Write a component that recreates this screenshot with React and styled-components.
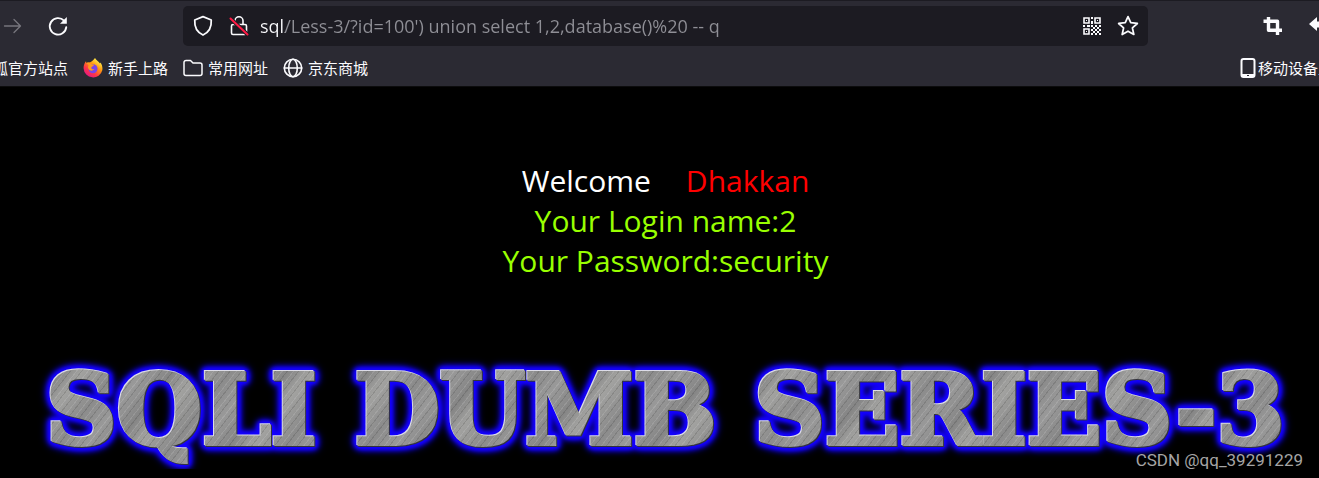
import { useState } from 'react';
import styled, { createGlobalStyle } from 'styled-components';

const UI_FONT = '"Open Sans", "Noto Sans CJK SC", sans-serif';

const GlobalStyle = createGlobalStyle`
  * {
    box-sizing: border-box;
  }
  body {
    margin: 0;
    background: #000;
    overflow-x: hidden;
    font-family: ${UI_FONT};
  }
`;

const Browser = styled.header`
  background: #2b2a33;
  border-top: 1px solid #1c1b22;
  border-bottom: 1px solid #0c0c0d;
  color: #fbfbfe;
`;

const Toolbar = styled.nav`
  display: flex;
  align-items: center;
  height: 50px;
`;

const ToolButton = styled.button`
  display: flex;
  flex: none;
  padding: 0;
  border: 0;
  background: none;
  color: ${props => (props.$dim ? '#77767e' : '#fbfbfe')};
`;

const NavButtons = styled.div`
  display: flex;
  flex: none;
  align-items: center;
  gap: 24px;
  width: 183px;
  padding-left: 3px;
`;

const UrlBar = styled.div`
  display: flex;
  flex: 1;
  align-items: center;
  gap: 15px;
  height: 40px;
  padding: 0 9px;
  border-radius: 5px;
  background: #1c1b22;
`;

/* host part bright, the rest of the address grey */
const UrlInput = styled.input`
  flex: 1;
  min-width: 0;
  height: 32px;
  margin-left: -4px;
  padding: 0;
  border: 0;
  outline: 0;
  font: 18px ${UI_FONT};
  color: transparent;
  background: linear-gradient(90deg, #fbfbfe 25px, #8f8f96 25px);
  background-clip: text;
  -webkit-background-clip: text;
`;

const Extensions = styled.div`
  display: flex;
  flex: none;
  align-items: center;
  justify-content: flex-end;
  gap: 26px;
  width: 171px;
`;

const Clipped = styled.div`
  display: flex;
  flex: none;
  width: ${props => props.$width}px;
  overflow: hidden;
  justify-content: ${props => (props.$end ? 'flex-end' : 'flex-start')};
`;

const Bookmarks = styled.nav`
  display: flex;
  align-items: center;
  gap: 15px;
  height: 35px;
  padding-bottom: 1px;
`;

const Bookmark = styled.a`
  display: flex;
  flex: none;
  align-items: center;
  gap: ${props => (props.$tight ? 2 : 5)}px;
  font-size: 15px;
  line-height: 22px;
  white-space: nowrap;
  color: inherit;
  text-decoration: none;
`;

const Spacer = styled.div`
  flex: 1;
`;

const Page = styled.main`
  padding-left: 12px;
`;

const Message = styled.section`
  padding-top: 74px;
  text-align: center;
  font-size: 30px;
  line-height: 40px;
  color: #99ff00;
`;

const Greeting = styled.div`
  display: flex;
  justify-content: center;
  gap: 35px;
  color: #fff;
`;

const UserName = styled.span`
  color: #f00;
`;

const Banner = styled.h1`
  display: flex;
  justify-content: space-between;
  margin: 70px 0 0;
  padding: 0 34px;
  font: bold 98px/118px "DejaVu Serif", serif;
  filter: drop-shadow(-1px -1px 0 #dcdce8) drop-shadow(1px 1px 0 #33333c)
    drop-shadow(0 0 2px #1400ff) drop-shadow(0 0 2px #1400ff)
    drop-shadow(0 0 2px #1400ff) drop-shadow(0 0 3px #1400ff);
`;

const Metal = styled.span`
  color: transparent;
  -webkit-text-stroke: 4px transparent;
  background:
    repeating-linear-gradient(128deg, rgba(255, 255, 255, 0.12) 0 1px, transparent 1px 4px, rgba(40, 40, 40, 0.16) 4px 5px, transparent 5px 9px),
    repeating-linear-gradient(128deg, #999 0, #858585 23px, #a2a2a0 41px, #8b8b8b 67px, #999 90px);
  background-clip: text;
  -webkit-background-clip: text;
`;

const Watermark = styled.footer`
  position: absolute;
  right: 16px;
  top: 450px;
  font: 17px/20px Roboto, sans-serif;
  color: #a5a5a5;
`;

const Icon = ({ size = 20, children, ...rest }) => (
  <svg width={size} height={size} viewBox="0 0 20 20" fill="none" stroke="currentColor"
    strokeWidth="1.6" strokeLinecap="round" strokeLinejoin="round" aria-hidden="true" {...rest}>
    {children}
  </svg>
);

const ForwardIcon = () => (
  <Icon><path d="M1.5 10h16M11 3.5l6.5 6.5-6.5 6.5" strokeWidth="1.3" /></Icon>
);

const ReloadIcon = () => (
  <Icon size={22}>
    <path d="M15.500 5.200A7.500 7.500 0 1 0 17.500 11" strokeWidth="1.7" />
    <path d="M18 1.800v6.200h-6.200z" fill="currentColor" stroke="none" />
  </Icon>
);

const ShieldIcon = () => (
  <Icon size={22}><path d="M10 1.5l7.500 3c.4 6.300-1.700 11-7.500 13.700C4.200 15.500 2.100 10.800 2.500 4.500z" /></Icon>
);

const LockIcon = () => (
  <Icon>
    <path d="M6 8V4.800a4 4 0 0 1 8 0V8M4 8.500h12a1.500 1.500 0 0 1 1.500 1.500v7a1.500 1.500 0 0 1-1.500 1.500H4A1.500 1.500 0 0 1 2.500 17v-7A1.500 1.500 0 0 1 4 8.500z" />
    <path d="M1.500 2.500l17 16" stroke="#1c1b22" strokeWidth="4" />
    <path d="M1.500 2.500l17 16" stroke="#ff1a45" strokeWidth="2" />
  </Icon>
);

const QrIcon = () => (
  <Icon strokeLinejoin="miter" strokeLinecap="butt">
    <path d="M2 2h5v5H2zM13 2h5v5h-5zM2 13h5v5H2z" />
    <path fill="currentColor" stroke="none" d="M4 4h1v1H4zM15 4h1v1h-1zM4 15h1v1H4zM9 1h2v2H9zM9 5h2v3H9zM1 9h2v2H1zM5 9h3v2H5zM9 9h2v2H9zM13 9h2v2h-2zM17 9h2v2h-2zM11 11h2v2h-2zM15 11h2v2h-2zM9 13h2v2H9zM13 13h2v2h-2zM17 13h2v2h-2zM11 15h2v2h-2zM15 15h2v2h-2zM9 17h2v2H9zM13 17h2v2h-2zM17 17h2v2h-2z" />
  </Icon>
);

const StarIcon = () => (
  <Icon size={22}><path d="M10 1.500l2.500 5.500 6 .7-4.500 4 1.300 6-5.300-3-5.300 3 1.300-6-4.500-4 6-.7z" /></Icon>
);

const CropIcon = () => (
  <Icon strokeWidth="3.400" strokeLinecap="butt" strokeLinejoin="round">
    <path d="M.5 5.200H14.500V19M5.500 1v13.300H19" />
  </Icon>
);

const UndoIcon = () => (
  <Icon><path d="M8 1v4.500c7 0 10 4 10 11-2-4-5-5-10-5V15L0 8z" fill="currentColor" stroke="none" /></Icon>
);

const FirefoxIcon = () => (
  <Icon stroke="none">
    <defs>
      <linearGradient id="flame" x1="16" y1="2" x2="4" y2="18" gradientUnits="userSpaceOnUse">
        <stop offset="0" stopColor="#fff44f" />
        <stop offset="0.35" stopColor="#ff980e" />
        <stop offset="0.7" stopColor="#ff3647" />
        <stop offset="1" stopColor="#e31587" />
      </linearGradient>
    </defs>
    <path fill="url(#flame)" d="M12 0c1.200 2.300 3.500 3 5 5.500l.4-1c1.600 2 2.400 5 1.900 7.700A9.500 9.500 0 0 1 .6 10.500C.4 7.500 1.500 5 3 3.200l.5 1.800C4.500 4.500 5.500 4.300 6.500 4.500 8 4 9.500 3 12 0z" />
    <circle cx="10" cy="10.800" r="4.500" fill="#7a45e8" />
    <path fill="#ff9a1e" d="M3.500 5C5 4.200 7 4.500 8 6c1 .4 2.300.5 3 .8-.3 1.500-2.300 1.600-2.700 2.700-.2 1.500 1.200 2.300 3 1.600-1.500 2.500-5 2-6-.5-.5-1.400-.2-2.500.3-3.300z" />
  </Icon>
);

const FolderIcon = () => (
  <Icon><path d="M3.500 2.500h4L10 5h7a2 2 0 0 1 2 2v8.500a2 2 0 0 1-2 2H3a2 2 0 0 1-2-2v-11a2 2 0 0 1 2.500-2z" strokeWidth="1.500" /></Icon>
);

const GlobeIcon = () => (
  <Icon>
    <circle cx="10" cy="10" r="8.700" />
    <ellipse cx="10" cy="10" rx="4.300" ry="8.700" />
    <path d="M1.300 10h17.400" />
  </Icon>
);

const PhoneIcon = () => (
  <svg width="16" height="20" viewBox="0 0 16 20" aria-hidden="true">
    <rect x="1.500" y="1" width="13" height="18" rx="2" fill="none" stroke="currentColor" strokeWidth="2" />
    <path d="M2 16h12v3H2z" fill="currentColor" />
    <path d="M7 17h2v1H7z" fill="#2b2a33" />
  </svg>
);

const bookmarks = [
  { label: '新手上路', icon: <FirefoxIcon /> },
  { label: '常用网址', icon: <FolderIcon /> },
  { label: '京东商城', icon: <GlobeIcon /> },
];

function App() {
  const [url, setUrl] = useState("sql/Less-3/?id=100') union select 1,2,database()%20 -- q");

  return (
    <>
      <GlobalStyle />
      <Browser>
        <Toolbar>
          <NavButtons>
            <ToolButton $dim aria-label="Forward"><ForwardIcon /></ToolButton>
            <ToolButton aria-label="Reload"><ReloadIcon /></ToolButton>
          </NavButtons>
          <UrlBar>
            <ToolButton aria-label="Tracking protection"><ShieldIcon /></ToolButton>
            <ToolButton aria-label="Connection not secure"><LockIcon /></ToolButton>
            <UrlInput aria-label="Address" value={url} onChange={e => setUrl(e.target.value)} spellCheck={false} />
            <ToolButton aria-label="QR code"><QrIcon /></ToolButton>
            <ToolButton aria-label="Bookmark"><StarIcon /></ToolButton>
          </UrlBar>
          <Extensions>
            <ToolButton aria-label="Crop"><CropIcon /></ToolButton>
            <Clipped $width={10}>
              <ToolButton aria-label="Undo"><UndoIcon /></ToolButton>
            </Clipped>
          </Extensions>
        </Toolbar>
        <Bookmarks>
          <Clipped $width={68} $end>
            <Bookmark href="#">狐官方站点</Bookmark>
          </Clipped>
          {bookmarks.map(item => (
            <Bookmark href="#" key={item.label}>{item.icon}{item.label}</Bookmark>
          ))}
          <Spacer />
          <Clipped $width={79}>
            <Bookmark href="#" $tight><PhoneIcon />移动设备上的书签</Bookmark>
          </Clipped>
        </Bookmarks>
      </Browser>
      <Page>
        <Message>
          <Greeting>Welcome<UserName>Dhakkan</UserName></Greeting>
          <div>Your Login name:2</div>
          <div>Your Password:security</div>
        </Message>
        <Banner>
          <Metal>SQLI</Metal>
          <Metal>DUMB</Metal>
          <Metal>SERIES-3</Metal>
        </Banner>
      </Page>
      <Watermark>CSDN @qq_39291229</Watermark>
    </>
  );
}

export default App;
